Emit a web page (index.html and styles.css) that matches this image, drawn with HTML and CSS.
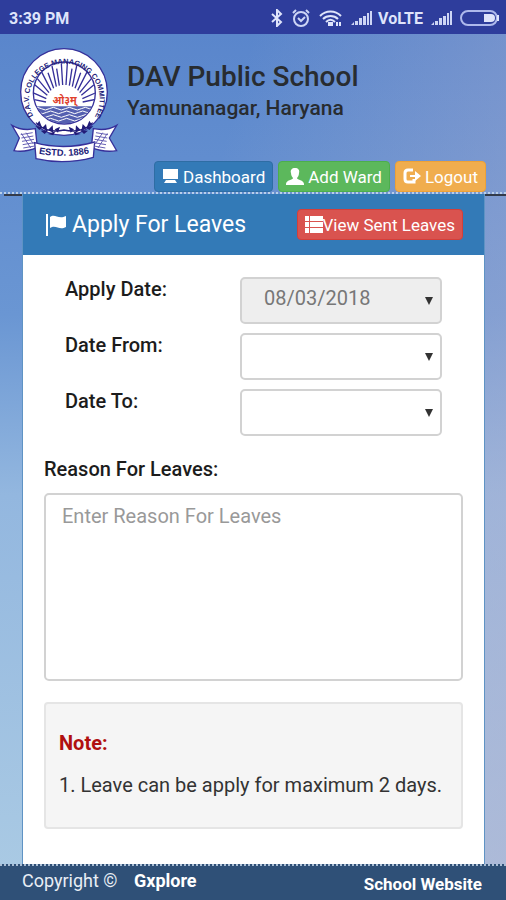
FILE: index.html
```html
<!DOCTYPE html>
<html lang="en">
<head>
  <meta charset="UTF-8">
  <meta name="viewport" content="width=device-width, initial-scale=1.0">
  <title>Apply For Leaves</title>
  <link rel="stylesheet" href="styles.css">
</head>
<body>

<!-- Status bar -->
<div class="statusbar">
  <span>3:39 PM</span>
  <div class="status-icons">
    <svg width="12" height="18" viewBox="0 0 12 18" fill="none" stroke="#dfe4fb" stroke-width="2">
      <path d="M1 5l9 8-4 4V1l4 4-9 8"/>
    </svg>
    <svg width="20" height="18" viewBox="0 0 20 18" fill="none" stroke="#cdd5f5" stroke-width="2">
      <circle cx="10" cy="10" r="7"/>
      <path d="M2 4l3-3M18 4l-3-3M7 9l3 3 4-4"/>
    </svg>
    <svg width="24" height="18" viewBox="0 0 24 18" fill="none" stroke="#dfe4fb" stroke-width="2">
      <path d="M1 7c6-6 15-6 21 0M4 10c4-4 11-4 15 0M7 13c3-3 6-3 9 0"/>
      <path d="M10 14h3v2h-3zM18 13v4M21 13v4"/>
    </svg>
    <svg width="21" height="16" viewBox="0 0 21 16" fill="#cdd5f5">
      <path d="M0 15l3-3v3zM4 11h3v4H4zM8 8h3v7H8zM12 6h3v9h-3zM16 3h2v12h-2zM19 1h2v14h-2z"/>
    </svg>
    <span>VoLTE</span>
    <svg width="21" height="16" viewBox="0 0 21 16" fill="#cdd5f5">
      <path d="M0 15l3-3v3zM4 11h3v4H4zM8 8h3v7H8zM12 6h3v9h-3zM16 3h2v12h-2zM19 1h2v14h-2z"/>
    </svg>
    <svg width="40" height="16" viewBox="0 0 40 16">
      <rect x="1" y="1" width="36" height="14" rx="7" fill="none" stroke="#aeb9ec" stroke-width="2"/>
      <path d="M24 4h7a4 4 0 0 1 0 8h-7z" fill="#dfe4fb"/>
      <path d="M38 5v6" stroke="#dfe4fb" stroke-width="2"/>
    </svg>
  </div>
</div>

<!-- Header -->
<header class="header">
  <div class="brand">
    <svg class="logo" viewBox="30 36 330 345" role="img" aria-label="D.A.V. College Managing Committee">
      <defs>
        <path id="ring" d="M100 240A106 106 0 1 1 286 240"/>
        <path id="ribbon" d="M116 353Q193 367 272 351"/>
        <clipPath id="disc"><circle cx="193" cy="171" r="92"/></clipPath>
      </defs>
      <g fill="#fff" stroke="#36309a" stroke-width="4">
        <path d="M36 268Q66 286 106 278L112 334Q76 350 42 344L58 306z"/>
        <path d="M350 268Q320 286 280 278L274 334Q310 350 350 344L328 306z"/>
        <circle cx="192" cy="168" r="130"/>
        <path d="M104 320Q192 344 284 318L280 364Q192 388 108 368z"/>
      </g>
      <g stroke="#6660b4" stroke-width="3" fill="none">
        <path d="M62 296l36-6M64 306l36-6M66 316l36-6M68 326l34-6M70 336l34-6M64 292l28 44M78 290l22 34"/>
        <path d="M288 290l36 6M286 300l36 6M284 310l36 6M282 320l36 6M282 330l34 6M322 292l-28 44M308 290l-22 34"/>
      </g>
      <circle cx="193" cy="171" r="93" fill="#fff" stroke="#36309a" stroke-width="4"/>
      <g clip-path="url(#disc)">
        <g stroke="#36309a" stroke-width="4">
          <path d="M138 198L98 190M139 188L98 170M142 178L104 146M147 170L112 128M153 163L124 106M161 157L144 110M169 152L156 90M178 149L170 98M188 147L184 82M198 147L202 82M208 149L216 98M217 152L230 90M225 157L242 110M233 163L262 106M239 170L274 128M244 178L282 146M247 188L288 170M248 198L288 190"/>
        </g>
        <path d="M143 208C140 140 246 140 243 208z" fill="#fff"/>
        <path d="M100 211h186v56H100z" fill="#5560b0"/>
        <g fill="none" stroke="#fff" stroke-width="3">
          <path d="M100 218q12-8 24 0t24 0 24 0 24 0 24 0 24 0 24 0 24 0"/>
          <path d="M92 229q12-8 24 0t24 0 24 0 24 0 24 0 24 0 24 0 24 0"/>
          <path d="M100 240q12-8 24 0t24 0 24 0 24 0 24 0 24 0 24 0 24 0"/>
          <path d="M92 251q12-8 24 0t24 0 24 0 24 0 24 0 24 0 24 0 24 0"/>
        </g>
      </g>
      <g fill="none" stroke="#221c78" stroke-width="4">
        <path d="M108 260Q140 294 192 282Q246 294 278 260"/>
      </g>
      <g fill="#221c78">
        <path d="M118 254l8 20-16-8zM106 270l24 4-12 8zM138 264l4 22-16-10zM122 284l24-2-12 12zM158 268l2 22-16-8zM144 294l22-8-6 12zM180 272l-6 18-10-10z"/>
        <path d="M268 254l-8 20 16-8zM280 270l-24 4 12 8zM248 264l-4 22 16-10zM264 284l-24-2 12 12zM228 268l-2 22 16-8zM242 294l-22-8 6 12zM206 272l6 18 10-10z"/>
      </g>
      <text class="logo-ring"><textPath href="#ring">D.A.V. COLLEGE MANAGING COMMITTEE</textPath></text>
      <text class="logo-om" x="194" y="204" text-anchor="middle">ओ३म्</text>
      <text class="logo-estd"><textPath href="#ribbon">ESTD. 1886</textPath></text>
    </svg>
    <div class="brand-text">
      <h1>DAV Public School</h1>
      <h2>Yamunanagar, Haryana</h2>
    </div>
  </div>
  <nav class="nav">
    <a class="btn btn-primary" href="#">
      <svg width="17" height="17" viewBox="0 0 17 17" fill="#fff"><path d="M1 1h15v10H1zM4 12h9l2 3H2z"/></svg>
      Dashboard
    </a>
    <a class="btn btn-success" href="#">
      <svg width="18" height="17" viewBox="0 0 18 17" fill="#fff"><path d="M9 0c3 0 5 2 4 5 0 2-1 4-2 5 0 2 7 2 7 6v1H0v-1c0-4 7-4 7-6-1-1-2-3-2-5-1-3 1-5 4-5z"/></svg>
      Add Ward
    </a>
    <a class="btn btn-warning" href="#">
      <svg width="18" height="17" viewBox="0 0 18 17"><path d="M10 2H5Q2 2 2 5v6q0 3 3 3h6v-3" fill="none" stroke="#fff" stroke-width="3"/><path d="M7 7h5V3l6 5-6 5v-4H7z" fill="#fff"/></svg>
      Logout
    </a>
  </nav>
</header>

<main class="main">
  <section class="panel">
    <div class="panel-heading">
      <h3>
        <svg width="20" height="22" viewBox="0 0 20 22" fill="#fff"><path d="M0 0h2v22H0zM4 3c5-4 8 3 16-1v11c-7 4-10-3-16 1z"/></svg>
        Apply For Leaves
      </h3>
      <a class="btn btn-danger" href="#">
        <svg width="18" height="17" viewBox="0 0 18 17" fill="#fff"><path d="M0 0h4v5H0zM5 0h13v5H5zM0 6h4v5H0zM5 6h13v5H5zM0 12h4v5H0zM5 12h13v5H5z"/></svg>View Sent Leaves
      </a>
    </div>

    <form class="panel-body">
      <div class="row">
        <label for="applyDate">Apply Date:</label>
        <select id="applyDate" name="applyDate" disabled>
          <option>08/03/2018</option>
        </select>
      </div>
      <div class="row">
        <label for="dateFrom">Date From:</label>
        <select id="dateFrom" name="dateFrom">
          <option></option>
        </select>
      </div>
      <div class="row">
        <label for="dateTo">Date To:</label>
        <select id="dateTo" name="dateTo">
          <option></option>
        </select>
      </div>

      <label class="reason-label" for="reason">Reason For Leaves:</label>
      <textarea id="reason" name="reason" placeholder="Enter Reason For Leaves"></textarea>

      <div class="note">
        <strong>Note:</strong>
        <p>1. Leave can be apply for maximum 2 days.</p>
      </div>
    </form>
  </section>
</main>

<footer class="footer">
  <p>Copyright © <a href="#">Gxplore</a></p>
  <a class="site-link" href="#">School Website</a>
</footer>

</body>
</html>
```
FILE: styles.css
```css
* {
  box-sizing: border-box;
}
body {
  display: flex;
  flex-direction: column;
  min-height: 100vh;
  margin: 0;
  font-family: Roboto, sans-serif;
  font-size: 20px;
  color: #333;
  background: linear-gradient(105deg, rgba(175, 175, 208, 0) 35%, rgba(175, 175, 208, 0.6) 100%),
    linear-gradient(#5884cb 0, #6a96d3 35%, #93b7df 55%, #abcbe4 100%);
}
h1, h2, h3, p {
  margin: 0;
}
a {
  text-decoration: none;
}

/* Status bar */
.statusbar {
  display: flex;
  justify-content: space-between;
  align-items: center;
  height: 34px;
  padding: 2px 6px 0 9px;
  background: #2e3d9c;
  color: #dfe4fb;
  font-size: 16px;
  font-weight: bold;
}
.status-icons {
  display: flex;
  align-items: center;
  gap: 8px;
}
.status-icons span {
  margin-left: -2px;
}

/* Header */
.header {
  display: flex;
  flex-direction: column;
  height: 160px;
  border-bottom: 2px dotted #b9cfea;
}
.brand {
  display: flex;
  flex: 1;
  padding: 14px 10px 0;
}
.logo {
  width: 110px;
  height: 115px;
  margin-bottom: -20px;
}
.logo-ring {
  font-family: "Liberation Sans", Arial, sans-serif;
  font-size: 22px;
  font-weight: bold;
  fill: #221c78;
}
.logo-om {
  font-family: "Noto Sans Devanagari", "Noto Sans", sans-serif;
  font-size: 31px;
  font-weight: bold;
  fill: #e0402c;
}
.logo-estd {
  font-family: "Liberation Sans", Arial, sans-serif;
  font-size: 28px;
  font-weight: bold;
  fill: #221c78;
}
.brand-text {
  padding: 12px 0 0 7px;
  color: #282c30;
}
h1 {
  font-size: 28px;
  line-height: 34px;
  font-weight: 500;
}
h2 {
  font-size: 21px;
  line-height: 28px;
  font-weight: 500;
}
.nav {
  display: flex;
  justify-content: flex-end;
  gap: 5px;
  padding-right: 20px;
}
.btn {
  display: inline-flex;
  align-items: center;
  gap: 4px;
  height: 31px;
  padding: 0 7px;
  border: 1px solid;
  border-radius: 4px;
  color: #fff;
  font-size: 17px;
}
.btn-primary {
  background: #337ab7;
  border-color: #2e6da4;
}
.btn-success {
  background: #5cb85c;
  border-color: #4cae4c;
}
.btn-warning {
  background: #f0ad4e;
  border-color: #eea236;
}
.btn-danger {
  gap: 0;
  background: #d9534f;
  border-color: #d43f3a;
}

/* Panel */
.main {
  display: flex;
  flex: 1;
  padding: 0 21px 0 22px;
  background: linear-gradient(#333b4a, #333b4a) right 0 top 0 / calc(100% - 4px) 2px no-repeat;
}
.panel {
  flex: 1;
  border: 1px solid #5f93c4;
  border-width: 0 1px;
  background: #fff;
}
.panel-heading {
  display: flex;
  justify-content: space-between;
  align-items: center;
  height: 61px;
  padding: 0 21px 0 23px;
  background: #337ab7;
}
h3 {
  display: flex;
  align-items: center;
  gap: 6px;
  color: #fff;
  font-size: 23px;
  font-weight: 400;
}
.panel-body {
  padding: 22px 21px;
}
.row {
  display: grid;
  grid-template-columns: 175fr 202fr;
  margin-bottom: 9px;
  padding: 0 21px;
}
label {
  line-height: 25px;
  color: #1c1c1c;
  font-weight: 500;
}
select, textarea {
  width: 100%;
  border: 2px solid #d2d2d2;
  border-radius: 5px;
  background: #fff;
  color: #777;
  font: inherit;
}
select {
  height: 47px;
  padding: 0 22px 5px;
  appearance: none;
  background: #fff url("data:image/svg+xml,%3Csvg xmlns='http://www.w3.org/2000/svg' width='8' height='8'%3E%3Cpath d='M0 0h8L4 8z' fill='%23333'/%3E%3C/svg%3E") right 7px center no-repeat;
}
select:disabled {
  background-color: #eee;
  color: #777;
  opacity: 1;
}
.reason-label {
  display: block;
  margin: 21px 0 11px;
}
textarea {
  display: block;
  height: 188px;
  padding: 9px 16px;
  resize: none;
}
textarea::placeholder {
  color: #999;
}
.note {
  margin-top: 21px;
  padding: 25px 13px;
  height: 127px;
  border: 2px solid #e5e5e5;
  border-radius: 4px;
  background: #f5f5f5;
}
.note strong {
  display: block;
  line-height: 28px;
  color: #b01010;
}
.note p {
  margin-top: 14px;
  line-height: 28px;
}

/* Footer */
.footer {
  display: flex;
  justify-content: space-between;
  height: 36px;
  padding: 0 24px 0 22px;
  border-top: 2px dotted #a9bdd4;
  background: #2f5077;
  color: #e8eef5;
  font-size: 18px;
  line-height: 30px;
}
.footer a {
  color: #fff;
  font-weight: bold;
}
.footer p a {
  margin-left: 12px;
}
.footer .site-link {
  padding-top: 3px;
  font-size: 17px;
}
```
